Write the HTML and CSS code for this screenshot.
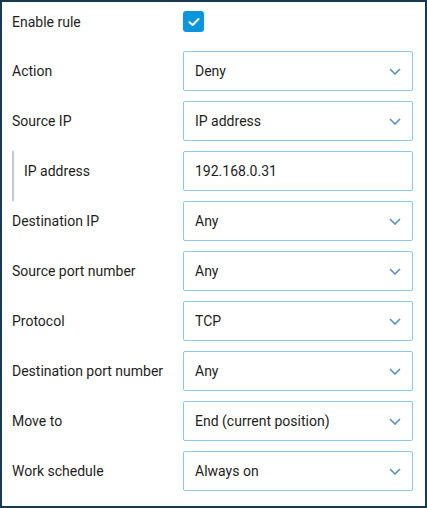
FILE: index.html
```html
<!DOCTYPE html>
<html>
<head>
<meta charset="utf-8">
<link rel="stylesheet" href="styles.css">
</head>
<body>
<form class="panel">
  <div class="label first">Enable rule</div>
  <div class="field first">
    <span class="checkbox">
      <svg width="12" height="10" viewBox="0 0 12 10"><path d="M1.5 5.2 L4.6 8 L10.5 2" fill="none" stroke="#fff" stroke-width="2" stroke-linecap="round" stroke-linejoin="round"/></svg>
    </span>
  </div>

  <div class="label">Action</div>
  <div class="select"><span>Deny</span><svg class="chev" width="12" height="7" viewBox="0 0 12 7"><path d="M1 1 L6 6 L11 1" fill="none" stroke="#5b8ec9" stroke-width="1.6"/></svg></div>

  <div class="label">Source IP</div>
  <div class="select"><span>IP address</span><svg class="chev" width="12" height="7" viewBox="0 0 12 7"><path d="M1 1 L6 6 L11 1" fill="none" stroke="#5b8ec9" stroke-width="1.6"/></svg></div>

  <div class="label sub">IP address</div>
  <div class="select input"><span>192.168.0.31</span></div>

  <div class="label">Destination IP</div>
  <div class="select"><span>Any</span><svg class="chev" width="12" height="7" viewBox="0 0 12 7"><path d="M1 1 L6 6 L11 1" fill="none" stroke="#5b8ec9" stroke-width="1.6"/></svg></div>

  <div class="label">Source port number</div>
  <div class="select"><span>Any</span><svg class="chev" width="12" height="7" viewBox="0 0 12 7"><path d="M1 1 L6 6 L11 1" fill="none" stroke="#5b8ec9" stroke-width="1.6"/></svg></div>

  <div class="label">Protocol</div>
  <div class="select"><span>TCP</span><svg class="chev" width="12" height="7" viewBox="0 0 12 7"><path d="M1 1 L6 6 L11 1" fill="none" stroke="#5b8ec9" stroke-width="1.6"/></svg></div>

  <div class="label">Destination port number</div>
  <div class="select"><span>Any</span><svg class="chev" width="12" height="7" viewBox="0 0 12 7"><path d="M1 1 L6 6 L11 1" fill="none" stroke="#5b8ec9" stroke-width="1.6"/></svg></div>

  <div class="label">Move to</div>
  <div class="select"><span>End (current position)</span><svg class="chev" width="12" height="7" viewBox="0 0 12 7"><path d="M1 1 L6 6 L11 1" fill="none" stroke="#5b8ec9" stroke-width="1.6"/></svg></div>

  <div class="label">Work schedule</div>
  <div class="select"><span>Always on</span><svg class="chev" width="12" height="7" viewBox="0 0 12 7"><path d="M1 1 L6 6 L11 1" fill="none" stroke="#5b8ec9" stroke-width="1.6"/></svg></div>
</form>
</body>
</html>
```

FILE: styles.css
```css
html, body {
  margin: 0;
  padding: 0;
  background: #ffffff;
}

.panel {
  box-sizing: border-box;
  width: 427px;
  height: 508px;
  border: 2px solid #173a52;
  padding: 0 12px 15px 10px;
  display: grid;
  grid-template-columns: 171px 1fr;
  grid-template-rows: 39px repeat(9, 40px);
  row-gap: 10px;
  font-family: Roboto, "Liberation Sans", sans-serif;
  font-size: 14px;
  color: #1e1e1e;
  margin: 0;
}

.label {
  display: flex;
  align-items: center;
  white-space: nowrap;
}

.label.sub {
  border-left: 2px solid #c8c8cc;
  padding-left: 10px;
  margin-bottom: -10px;
  padding-bottom: 10px;
}

.field {
  display: flex;
  align-items: center;
}

.checkbox {
  width: 21px;
  height: 21px;
  border-radius: 3px;
  background: #0b96dc;
  display: flex;
  align-items: center;
  justify-content: center;
}

.select {
  box-sizing: border-box;
  border: 1px solid #8ccaec;
  border-radius: 2px;
  display: flex;
  align-items: center;
  justify-content: space-between;
  padding: 0 11px 0 11px;
  white-space: nowrap;
}

.chev {
  display: block;
  margin-top: 1px;
}
```
